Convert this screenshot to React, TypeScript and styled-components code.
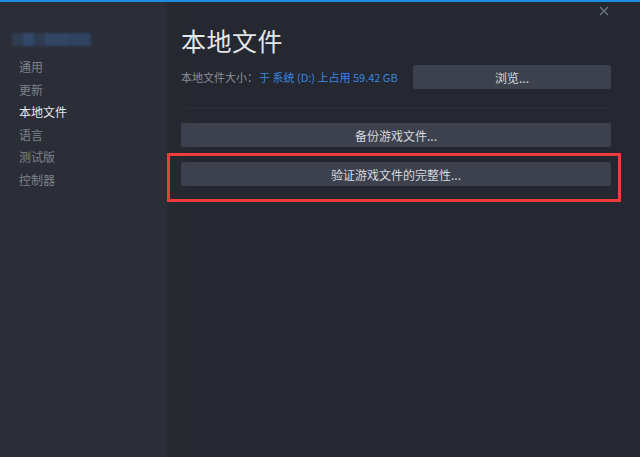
import React from 'react';
import styled, { createGlobalStyle } from 'styled-components';

const GlobalStyle = createGlobalStyle`
  html, body {
    margin: 0;
    padding: 0;
    background: #252830;
  }
  body {
    font-family: "Noto Sans CJK SC", "Noto Sans", "Liberation Sans", sans-serif;
  }
`;

const Window = styled.div`
  position: relative;
  display: flex;
  flex-direction: row;
  width: 640px;
  height: 457px;
  overflow: hidden;
  background: #252830;
  border-top: 2px solid #1a8fe3;
  box-sizing: border-box;
`;

const Sidebar = styled.nav`
  display: flex;
  flex-direction: column;
  width: 163px;
  flex-shrink: 0;
  background: #2b2e37;
  padding: 31px 0 0 0;
  box-sizing: border-box;
`;

const BlurredName = styled.div`
  width: 79px;
  height: 13px;
  margin: 0 0 10px 12px;
  filter: blur(1.2px);
  background: linear-gradient(
    90deg,
    #2f3c52 0px,
    #2f3c52 11px,
    #34496a 11px,
    #34496a 22px,
    #2e3b50 22px,
    #2e3b50 33px,
    #324664 33px,
    #324664 56px,
    #2f4260 56px,
    #2f4260 79px
  );
`;

const NavItem = styled.div<{ $active?: boolean }>`
  padding-left: 19px;
  height: 22.6px;
  line-height: 22.6px;
  font-size: 12px;
  color: ${({ $active }) => ($active ? '#e6e8ea' : '#7c828c')};
`;

const Main = styled.main`
  position: relative;
  flex: 1;
  display: flex;
  flex-direction: column;
  padding: 21px 29px 0 18px;
  background: linear-gradient(90deg, #2c2f38 0px, #262930 6px, #252830 40px);
`;

const CloseButton = styled.div`
  position: absolute;
  top: 4px;
  right: 31px;
  display: flex;
  width: 10px;
  height: 10px;
  color: #6f7680;
`;

const Title = styled.h1`
  margin: 0;
  font-size: 25px;
  font-weight: 400;
  line-height: 34px;
  color: #e4e6e8;
  letter-spacing: 0.5px;
`;

const SizeRow = styled.div`
  display: flex;
  flex-direction: row;
  align-items: center;
  margin-top: 8px;
`;

const SizeLabel = styled.span`
  font-size: 11px;
  color: #8a9099;
  margin-right: 1px;
`;

const SizeValue = styled.span`
  font-size: 11px;
  color: #3a86e0;
`;

const Button = styled.div<{ $width?: number }>`
  display: flex;
  justify-content: center;
  align-items: center;
  height: 24px;
  ${({ $width }) => ($width ? `width: ${$width}px;` : '')}
  background: #3d414d;
  border-radius: 2px;
  font-size: 12px;
  color: #d6d9dd;
`;

const BrowseButton = styled(Button)`
  margin-left: auto;
`;

const Divider = styled.div`
  height: 1px;
  background: #2d3039;
  margin: 18px 0 15px 0;
`;

const ButtonStack = styled.div`
  display: flex;
  flex-direction: column;
  gap: 15px;
`;

const Highlighted = styled.div`
  position: relative;
`;

const RedFrame = styled.div`
  position: absolute;
  top: -9px;
  bottom: -16px;
  left: -14px;
  right: -10px;
  border: 3px solid #ee3b3b;
  pointer-events: none;
`;

const navItems = ['通用', '更新', '本地文件', '语言', '测试版', '控制器'];

const App = () => {
  return (
    <>
      <GlobalStyle />
      <Window>
        <Sidebar>
          <BlurredName />
          {navItems.map((item) => (
            <NavItem key={item} $active={item === '本地文件'}>
              {item}
            </NavItem>
          ))}
        </Sidebar>
        <Main>
          <CloseButton>
            <svg width='10' height='10' viewBox='0 0 10 10'>
              <path d='M1 1 L9 9 M9 1 L1 9' stroke='currentColor' strokeWidth='1.3' />
            </svg>
          </CloseButton>
          <Title>本地文件</Title>
          <SizeRow>
            <SizeLabel>本地文件大小：</SizeLabel>
            <SizeValue>于 系统 (D:) 上占用 59.42 GB</SizeValue>
            <BrowseButton $width={198}>浏览...</BrowseButton>
          </SizeRow>
          <Divider />
          <ButtonStack>
            <Button>备份游戏文件...</Button>
            <Highlighted>
              <Button>验证游戏文件的完整性...</Button>
              <RedFrame />
            </Highlighted>
          </ButtonStack>
        </Main>
      </Window>
    </>
  );
};

export default App;
